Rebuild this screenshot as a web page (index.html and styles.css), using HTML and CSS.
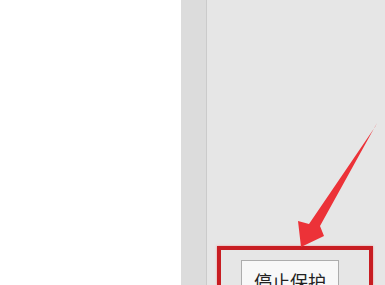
FILE: index.html
```html
<!DOCTYPE html>
<html>
  <head>
    <title>停止保护</title>
    <link rel="stylesheet" href="styles.css">
  </head>
  <body>
    <div class="screen">
      <div class="blank"></div>
      <div class="strip"></div>
      <div class="panel">
        <button class="stop-btn">停止保护</button>
      </div>
    </div>

    <!-- annotation: highlight box + arrow -->
    <div class="highlight"></div>
    <svg class="arrow" width="385" height="285" viewBox="0 0 385 285">
      <polygon points="377,123 320,226 324,236 301,247 298,221 309,224 375,127" fill="#ec3238" />
    </svg>
  </body>
</html>
```

FILE: styles.css
```css
body {
  margin: 0;
  font-family: "Noto Sans CJK SC", "Noto Sans", sans-serif;
  background-color: #fff;
  overflow: hidden;
}

.screen {
  display: flex;
  flex-direction: row;
  width: 385px;
  height: 285px;
}

.blank {
  width: 181px;
  background-color: #fff;
}

.strip {
  width: 25px;
  background-color: #dcdcdc;
  border-right: 1px solid #cbcbcb;
}

.panel {
  flex: 1;
  background-color: #e6e6e6;
  padding: 260px 0 0 34px;
}

.stop-btn {
  width: 98px;
  height: 25px;
  padding: 8px 0 0;
  background-color: #f8f8f8;
  border: 1px solid #adadad;
  border-bottom: none;
  font-family: "Noto Sans CJK SC", sans-serif;
  font-size: 18px;
  line-height: 24px;
  color: #222;
  text-align: center;
  vertical-align: top;
  overflow: hidden;
  white-space: nowrap;
}

.highlight {
  position: absolute;
  left: 217px;
  top: 246px;
  width: 148px;
  height: 35px;
  border: 4px solid #c81d22;
  border-bottom: none;
  box-shadow: 0 0 2px rgba(255, 90, 90, 0.6);
}

.arrow {
  position: absolute;
  left: 0;
  top: 0;
}
```
